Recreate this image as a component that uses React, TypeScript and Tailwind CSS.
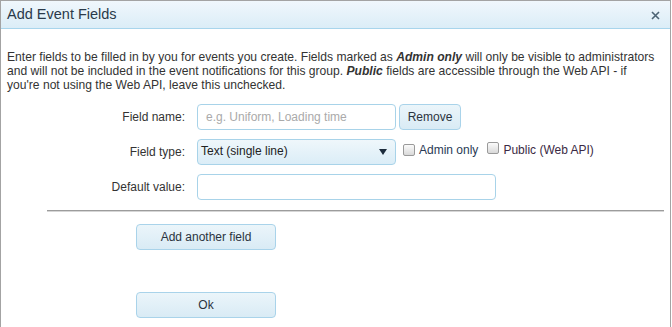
const FONT = { fontFamily: '"Liberation Sans", Arial, sans-serif' };

function Checkbox() {
    return (
        <span className="inline-block h-[12px] w-[12px] rounded-[2px] border border-[#9a9a9a] bg-gradient-to-b from-[#fbfbfb] to-[#d9d9d9]" />
    );
}

function Button({ label, className = "" }: { label: string; className?: string }) {
    return (
        <button
            className={`flex items-center justify-center rounded-[4px] border border-[#a9d3ea] bg-gradient-to-b from-[#ebf5fa] to-[#d9ebf5] text-[12px] text-[#2b3340] ${className}`}
        >
            {label}
        </button>
    );
}

export default function App() {
    return (
        <div className="h-[327px] w-[672px] overflow-hidden bg-white" style={FONT}>
            <div className="h-[340px] w-[671px] border-l border-r border-t border-[#a3a3a3] bg-white">
                {/* Title bar */}
                <div className="flex h-[28px] items-center justify-between border-b border-[#a8d5ec] bg-gradient-to-b from-[#f0f7fc] to-[#dbedf7] pl-[6px] pr-[10px]">
                    <span className="text-[14.5px] text-[#2a3a4a]">Add Event Fields</span>
                    <svg width="9" height="9" viewBox="0 0 9 9" className="mt-[1px]">
                        <path d="M1 1 L8 8 M8 1 L1 8" stroke="#4d6474" strokeWidth="1.6" />
                    </svg>
                </div>

                {/* Body */}
                <div className="pl-[6px] pr-[4px] pt-[21px] text-[12.1px] leading-[14px] text-[#333] whitespace-nowrap">
                    Enter fields to be filled in by you for events you create. Fields marked as{" "}
                    <b className="italic">Admin only</b> will only be visible to administrators
                    <br />
                    and will not be included in the event notifications for this group.{" "}
                    <b className="italic">Public</b> fields are accessible through the Web API - if
                    <br />
                    you're not using the Web API, leave this unchecked.
                </div>

                <div className="mt-[12px] flex flex-col gap-[9px] text-[12px] text-[#333]">
                    <div className="flex h-[26px] items-center">
                        <span className="w-[184px] text-right">Field name:</span>
                        <div className="ml-[12px] flex h-[26px] w-[199px] items-center rounded-[4px] border border-[#a8d3e9] pl-[8px] text-[#aaa]">
                            e.g. Uniform, Loading time
                        </div>
                        <Button label="Remove" className="ml-[3px] h-[26px] w-[62px]" />
                    </div>
                    <div className="flex h-[26px] items-center">
                        <span className="w-[184px] text-right">Field type:</span>
                        <div className="ml-[12px] flex h-[26px] w-[199px] items-center justify-between rounded-[4px] border border-[#a8d3e9] bg-gradient-to-b from-[#eff7fb] to-[#dbedf7] pl-[3px] pr-[8px] text-[#222]">
                            <span className="-mt-[2px]">Text (single line)</span>
                            <svg width="8" height="6" viewBox="0 0 8 6">
                                <path d="M0 0 L8 0 L4 6 Z" fill="#1c2c3c" />
                            </svg>
                        </div>
                        <div className="ml-[7px] flex items-center gap-[4px] -mt-[4px]">
                            <Checkbox />
                            <span className="text-[#2a3a55]">Admin only</span>
                            <span className="ml-[5px]">
                                <Checkbox />
                            </span>
                            <span className="text-[#3a2a44]">Public (Web API)</span>
                        </div>
                    </div>
                    <div className="flex h-[26px] items-center">
                        <span className="w-[184px] text-right">Default value:</span>
                        <div className="ml-[12px] h-[26px] w-[299px] rounded-[4px] border border-[#a8d3e9]" />
                    </div>
                </div>

                <div className="ml-[46px] mr-[6px] mt-[10px] border-b border-t border-b-[#d6d6d6] border-t-[#9c9c9c]" />

                <Button label="Add another field" className="ml-[135px] mt-[12px] h-[26px] w-[140px]" />
                <Button label="Ok" className="ml-[135px] mt-[42px] h-[26px] w-[140px]" />
            </div>
        </div>
    );
}
